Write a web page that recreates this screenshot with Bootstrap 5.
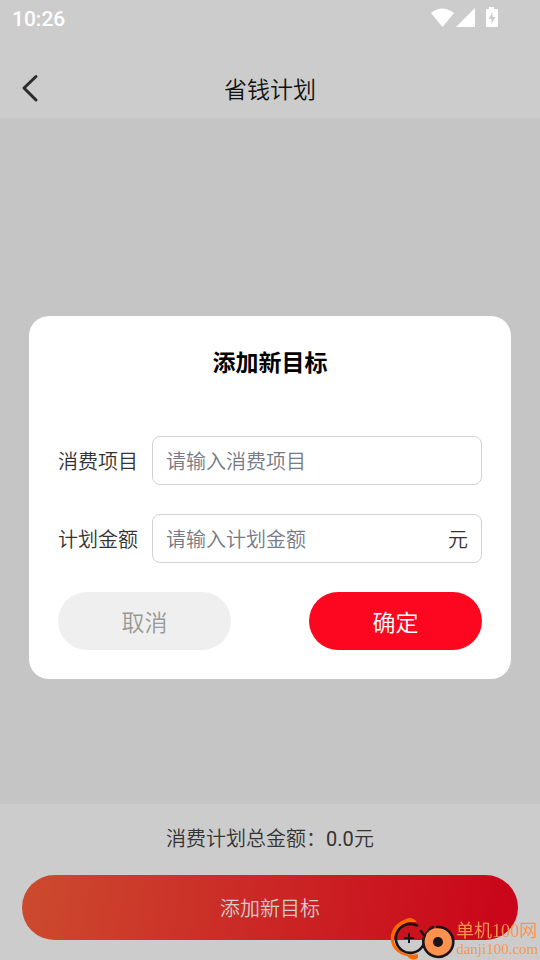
<!DOCTYPE html>
<html lang="zh-CN">
<head>
<meta charset="utf-8">
<meta name="viewport" content="width=device-width, initial-scale=1">
<title>省钱计划</title>
<link href="https://cdn.jsdelivr.net/npm/bootstrap@5.3.0/dist/css/bootstrap.min.css" rel="stylesheet">
<style>
  body { font-family: "Noto Sans CJK SC", sans-serif; font-size: 20px; line-height: 30px; font-weight: 350; color: #333; background: #c5c5c5; }
  .shade { background: #ccc; }
  .latin { font-family: Roboto, sans-serif; line-height: 1; font-weight: 400; }
  .status-bar { height: 38px; padding: 0 40px 0 12px; color: #fff; font-size: 21px; }
  .status-bar .latin { font-weight: 500; }
  .status-bar svg { margin-bottom: 2px; }
  .title-bar { display: grid; grid-template-columns: 60px 1fr 60px; height: 60px; margin-top: 20px; }
  .big-text { font-size: 23px; line-height: 32px; font-weight: 350; }
  .page-title { color: #111; }
  .total-bar { padding: 19px 22px 20px; gap: 22px; }
  .add-btn { height: 65px; color: #d4cccc; border: 0; font-weight: 350; background: linear-gradient(100deg, #cc4b2e, #cb2a26 45%, #ca0319); }
  .overlay { top: 35px; padding: 0 29px; }
  .dialog-box { padding: 29px; gap: 29px; border-radius: 20px; }
  .dialog-title { color: #000; margin-bottom: 30px; }
  .field-row { gap: 14px; }
  .field-box { height: 49px; border: 1px solid #d2d2d2; border-radius: 8px; padding: 0 13px; }
  .field-box input { font-size: 20px; line-height: 30px; font-weight: 350; color: #333; outline: 0; min-width: 0; }
  .field-box input::placeholder { color: #757a86; opacity: 1; }
  .dialog-btn { width: 173px; height: 58px; border: 0; }
  .cancel-btn { background: #efefef; color: #999; }
  .ok-btn { background: #fd0720; color: #fff; }
  .site-mark { right: 2px; bottom: 0; color: #fd924f; font-weight: 400; font-family: "Liberation Serif", "Noto Sans CJK SC", serif; }
  .site-text { padding-top: 2px; }
  .site-name { font-size: 18px; line-height: 20px; }
  .site-host { font-size: 15px; line-height: 16px; }
</style>
<script src="https://cdn.jsdelivr.net/npm/bootstrap@5.3.0/dist/js/bootstrap.bundle.min.js"></script>
</head>
<body class="min-vh-100 d-flex flex-column">
<header class="shade">
  <div class="status-bar d-flex align-items-center justify-content-between">
    <span class="latin">10:26</span>
    <svg width="70" height="24" viewBox="0 0 70 24" fill="#fff" aria-hidden="true">
      <path d="M1 7Q12 -2 24 7L12.500 21Z"/>
      <path d="M26 21H45V2Z"/>
      <path fill-rule="evenodd" d="M59 1h5v2h3q1 0 1 1v16q0 1-1 1H57q-1 0-1-1V4q0-1 1-1h2zM62.500 6L58.500 13h3v5l4-7h-3z"/>
    </svg>
  </div>
  <nav class="title-bar align-items-center" aria-label="标题栏">
    <button type="button" class="btn border-0 p-0 lh-1" aria-label="返回">
      <svg width="20" height="30" viewBox="0 0 20 30" fill="none" stroke="#2b2b2b" stroke-width="3" stroke-linecap="round" stroke-linejoin="round"><path d="M16 3.500L4 15L16 27"/></svg>
    </button>
    <h1 class="page-title big-text text-center m-0">省钱计划</h1>
  </nav>
</header>
<main class="flex-fill"></main>
<footer class="total-bar shade d-flex flex-column">
  <div class="text-center">消费计划总金额：<span class="latin">0.0</span>元</div>
  <button type="button" class="add-btn rounded-pill w-100">添加新目标</button>
</footer>

<div class="overlay position-fixed start-0 end-0 bottom-0 d-flex align-items-center">
  <form class="dialog-box bg-white w-100 d-flex flex-column" role="dialog" aria-labelledby="dialogTitle">
    <h2 class="dialog-title big-text fw-bold text-center mt-0" id="dialogTitle">添加新目标</h2>
    <div class="field-row d-flex align-items-center">
      <label for="item" class="text-nowrap">消费项目</label>
      <div class="field-box d-flex align-items-center flex-fill">
        <input id="item" type="text" class="border-0 p-0 bg-transparent w-100" placeholder="请输入消费项目">
      </div>
    </div>
    <div class="field-row d-flex align-items-center">
      <label for="amount" class="text-nowrap">计划金额</label>
      <div class="field-box d-flex align-items-center flex-fill">
        <input id="amount" type="text" inputmode="decimal" class="border-0 p-0 bg-transparent w-100" placeholder="请输入计划金额">
        <span>元</span>
      </div>
    </div>
    <div class="d-flex justify-content-between">
      <button type="button" class="dialog-btn cancel-btn big-text rounded-pill">取消</button>
      <button type="button" class="dialog-btn ok-btn big-text rounded-pill">确定</button>
    </div>
  </form>
</div>

<div class="site-mark position-fixed d-flex align-items-center">
  <svg width="66" height="44" viewBox="0 0 66 44" fill="none" aria-hidden="true">
    <path d="M27 6Q22 0 16 3C4 7 -2 18 2 29Q6 38 17 40Q22 46 28 42L28 38Q18 40 12 36Q3 30 4 21Q6 11 18 6Z" fill="#ff6a00"/>
    <path d="M27 9.500A14.500 14.500 0 1 0 32 31Q36 27 36 21Q37 14 43 11" stroke="#1c1518" stroke-width="2.600" stroke-linecap="round"/>
    <path d="M31 15L36 22" stroke="#1c1518" stroke-width="2.600" stroke-linecap="round"/>
    <circle cx="48" cy="26" r="14" fill="#fd924f"/>
    <path d="M47 11A15 15 0 1 1 35 19" stroke="#1c1518" stroke-width="2.600" stroke-linecap="round"/>
    <circle cx="48" cy="26" r="5" fill="#1c1518"/>
    <path d="M14 22H24M19 17V27" stroke="#1c1518" stroke-width="2"/>
  </svg>
  <div class="site-text">
    <div class="site-name">单机100网</div>
    <div class="site-host">danji100.com</div>
  </div>
</div>
</body>
</html>
